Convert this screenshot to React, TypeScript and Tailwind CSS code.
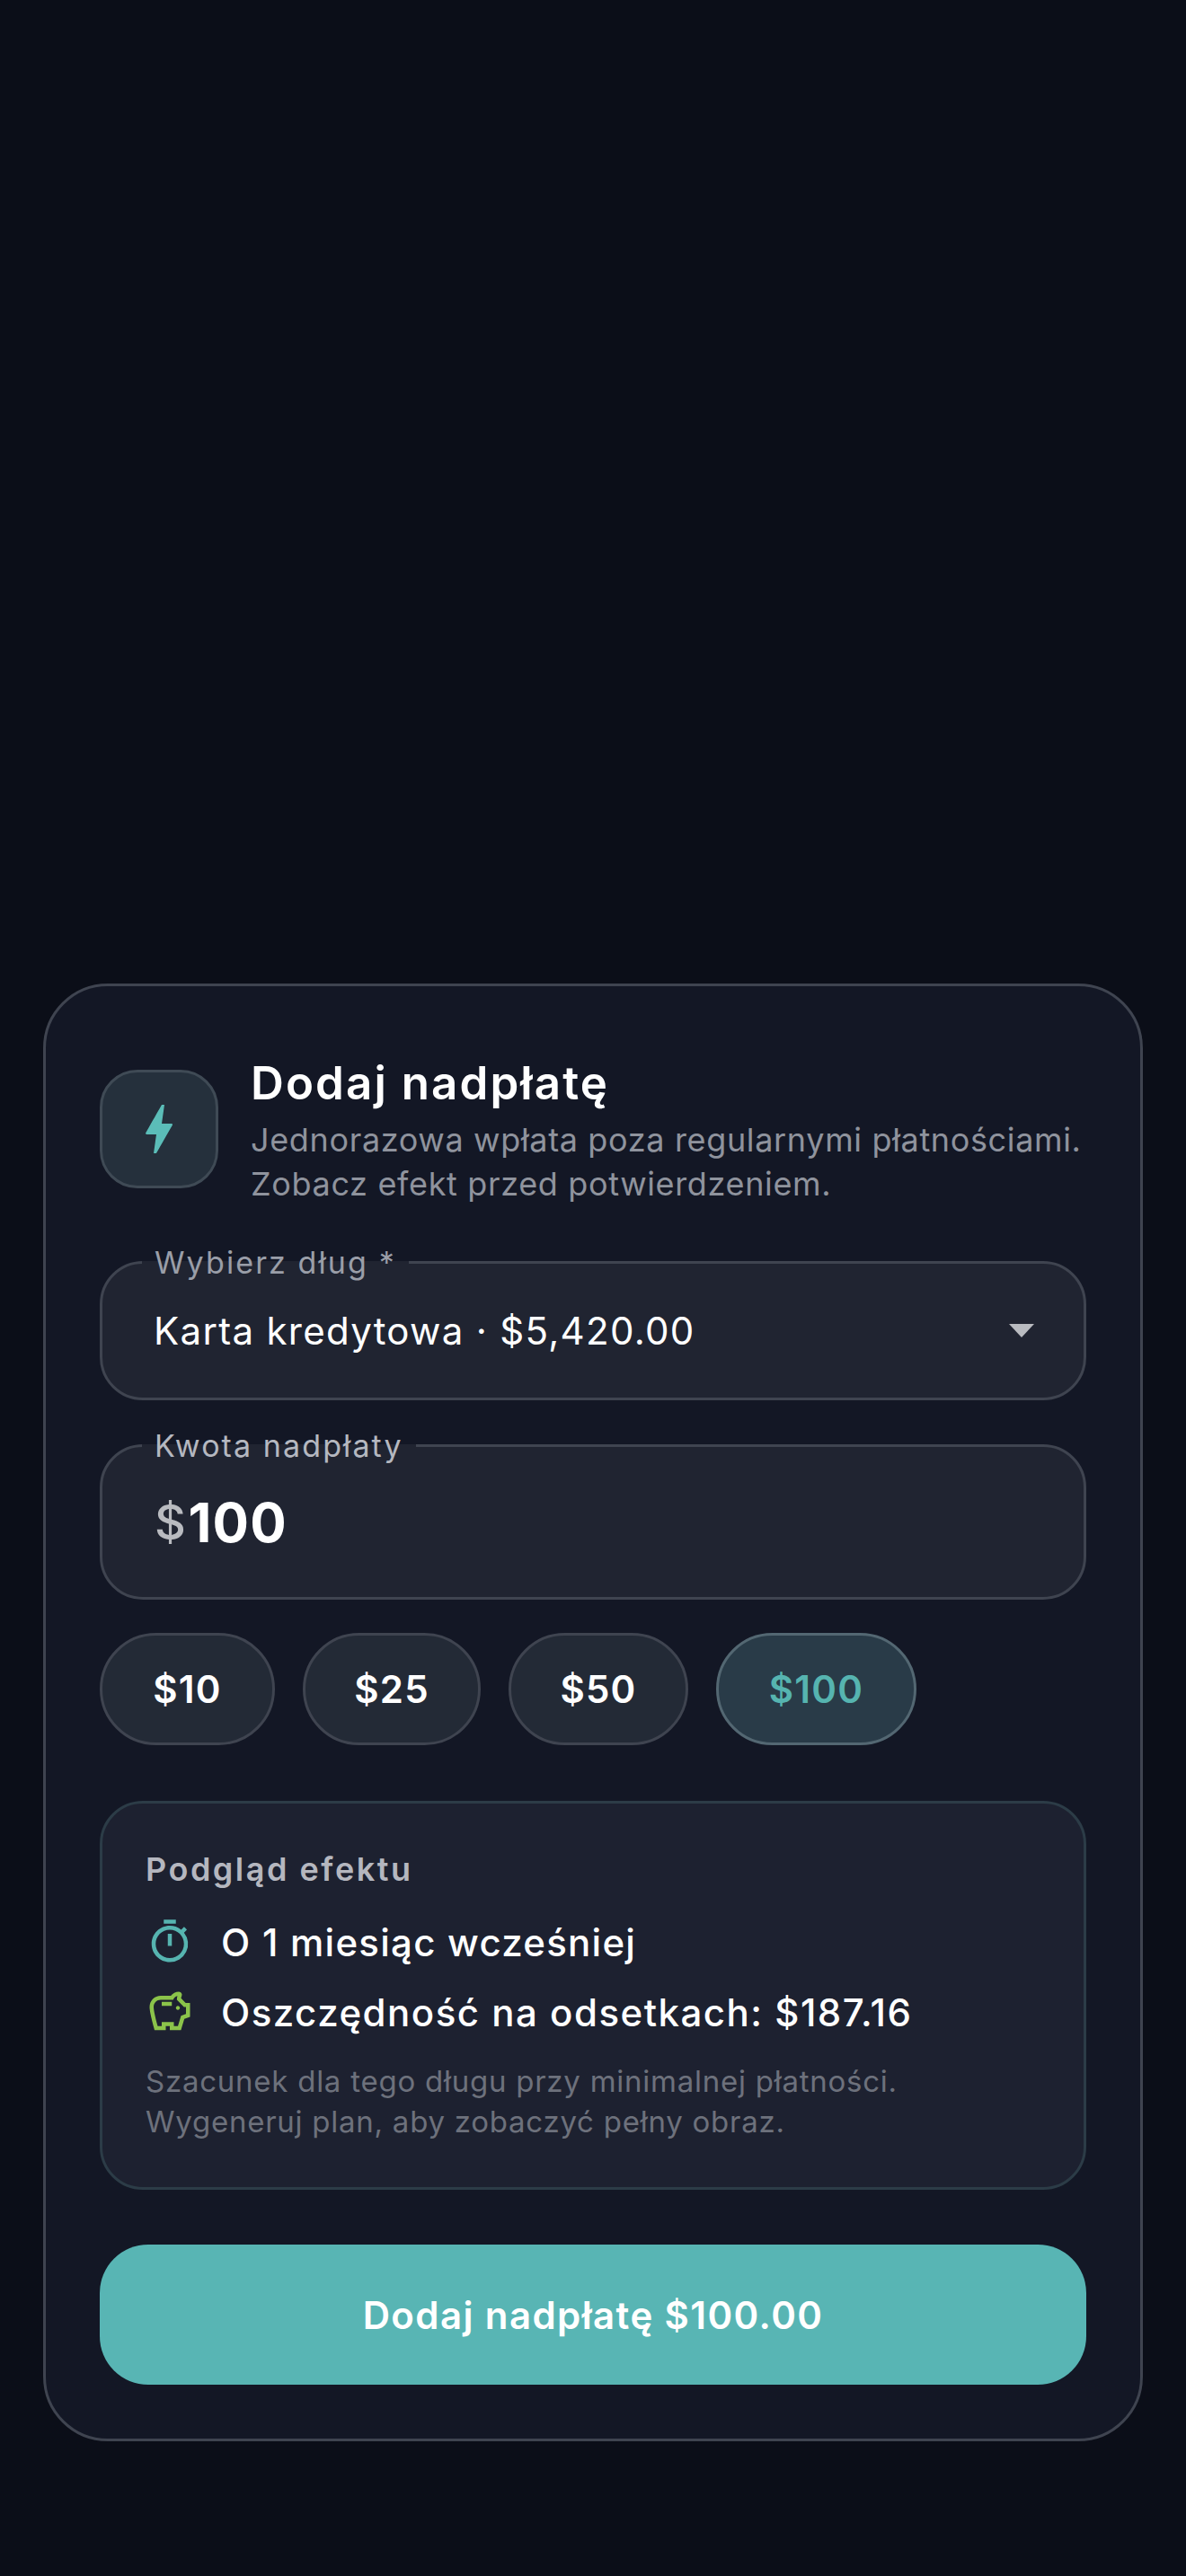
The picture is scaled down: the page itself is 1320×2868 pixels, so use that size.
import { MdBolt, MdOutlineSavings, MdOutlineTimer } from "react-icons/md";

// Overpayment sheet, drawn at 3x (440x956 layout)
const amounts = [
  { label: "$10", width: "w-[195px]", active: false },
  { label: "$25", width: "w-[198px]", active: false },
  { label: "$50", width: "w-[200px]", active: false },
  { label: "$100", width: "w-[223px]", active: true },
];

export default function App() {
  return (
    <div className="flex h-[2868px] flex-col justify-end bg-[#0b0e18] px-[48px] pb-[150px] font-['Inter',sans-serif] text-white">
      <div className="rounded-[72px] border-[3px] border-[#3f4450] bg-[#131725] px-[60px] pt-[73px] pb-[60px]">
        <div className="flex items-center gap-[36px]">
          <div className="flex h-[132px] w-[132px] shrink-0 items-center justify-center rounded-[42px] border-[3px] border-[#3f4a55] bg-[#25303c]">
            <MdBolt className="text-[72px] text-[#5bbdb8]" />
          </div>
          <div>
            <h1 className="text-[51px] leading-[70px] font-semibold tracking-[2.1px]">Dodaj nadpłatę</h1>
            <p className="mt-[4px] text-[36px] leading-[49px] tracking-[0.65px] text-[#8f939d]">
              Jednorazowa wpłata poza regularnymi płatnościami.
              <br />
              Zobacz efekt przed potwierdzeniem.
            </p>
          </div>
        </div>

        <div className="relative mt-[61px] flex h-[155px] items-center justify-between rounded-[48px] border-[3px] border-[#3f4450] bg-[#202431] pr-[55px] pl-[57px]">
          <span className="absolute top-[-21px] left-[44px] bg-[linear-gradient(#131725_45%,#202431_45%)] px-[14px] text-[34px] leading-[40px] tracking-[2.1px] text-[#9a9ea8]">
            Wybierz dług *
          </span>
          <span className="text-[42px] tracking-[1.3px]">Karta kredytowa · $5,420.00</span>
          <svg width="28" height="15" viewBox="0 0 28 15" className="fill-[#b9bbc0]">
            <path d="M0 0h28L14 15z" />
          </svg>
        </div>

        <div className="relative mt-[49px] flex h-[173px] items-center rounded-[48px] border-[3px] border-[#3f4450] bg-[#202431] pl-[58px]">
          <span className="absolute top-[-21px] left-[44px] bg-[linear-gradient(#131725_45%,#202431_45%)] px-[14px] text-[34px] leading-[40px] tracking-[2.1px] text-[#b5b8c0]">
            Kwota nadpłaty
          </span>
          <span className="text-[54px] font-medium tracking-[1.5px] text-[#b9bbc0]">$</span>
          <span className="ml-[1px] text-[60px] font-bold tracking-[1.3px]">100</span>
        </div>

        <div className="mt-[37px] flex gap-[31px]">
          {amounts.map((a) => (
            <button
              key={a.label}
              className={
                a.active
                  ? `h-[125px] ${a.width} rounded-full border-[3px] border-[#536772] bg-[#293b48] text-[42px] font-semibold tracking-[1.2px] text-[#56b4b0]`
                  : `h-[125px] ${a.width} rounded-full border-[3px] border-[#3f4450] bg-[#232a36] text-[42px] font-semibold tracking-[1.2px] text-white`
              }
            >
              {a.label}
            </button>
          ))}
        </div>

        <div className="mt-[62px] rounded-[48px] border-[3px] border-[#2c3c47] bg-[#1d2130] px-[48px] pt-[49px] pb-[50px]">
          <div className="text-[36px] leading-[48px] font-semibold tracking-[2.5px] text-[#b5b7bf]">Podgląd efektu</div>
          <div className="mt-[27px] flex h-[60px] items-center gap-[30px]">
            <MdOutlineTimer className="shrink-0 text-[54px] text-[#56b4b0]" />
            <span className="text-[42px] font-medium tracking-[1.25px]">O 1 miesiąc wcześniej</span>
          </div>
          <div className="mt-[18px] flex h-[60px] items-center gap-[30px]">
            <MdOutlineSavings className="shrink-0 text-[54px] text-[#8bc34a]" />
            <span className="text-[42px] font-medium tracking-[1.5px]">Oszczędność na odsetkach: $187.16</span>
          </div>
          <p className="mt-[25px] text-[33px] leading-[45px] tracking-[0.75px] text-[#6d717c]">
            Szacunek dla tego długu przy minimalnej płatności.
            <br />
            Wygeneruj plan, aby zobaczyć pełny obraz.
          </p>
        </div>

        <button className="mt-[61px] flex h-[156px] w-full items-center justify-center rounded-[54px] bg-[#58b5b4] text-[42px] font-semibold tracking-[1.4px]">
          Dodaj nadpłatę $100.00
        </button>
      </div>
    </div>
  );
}
